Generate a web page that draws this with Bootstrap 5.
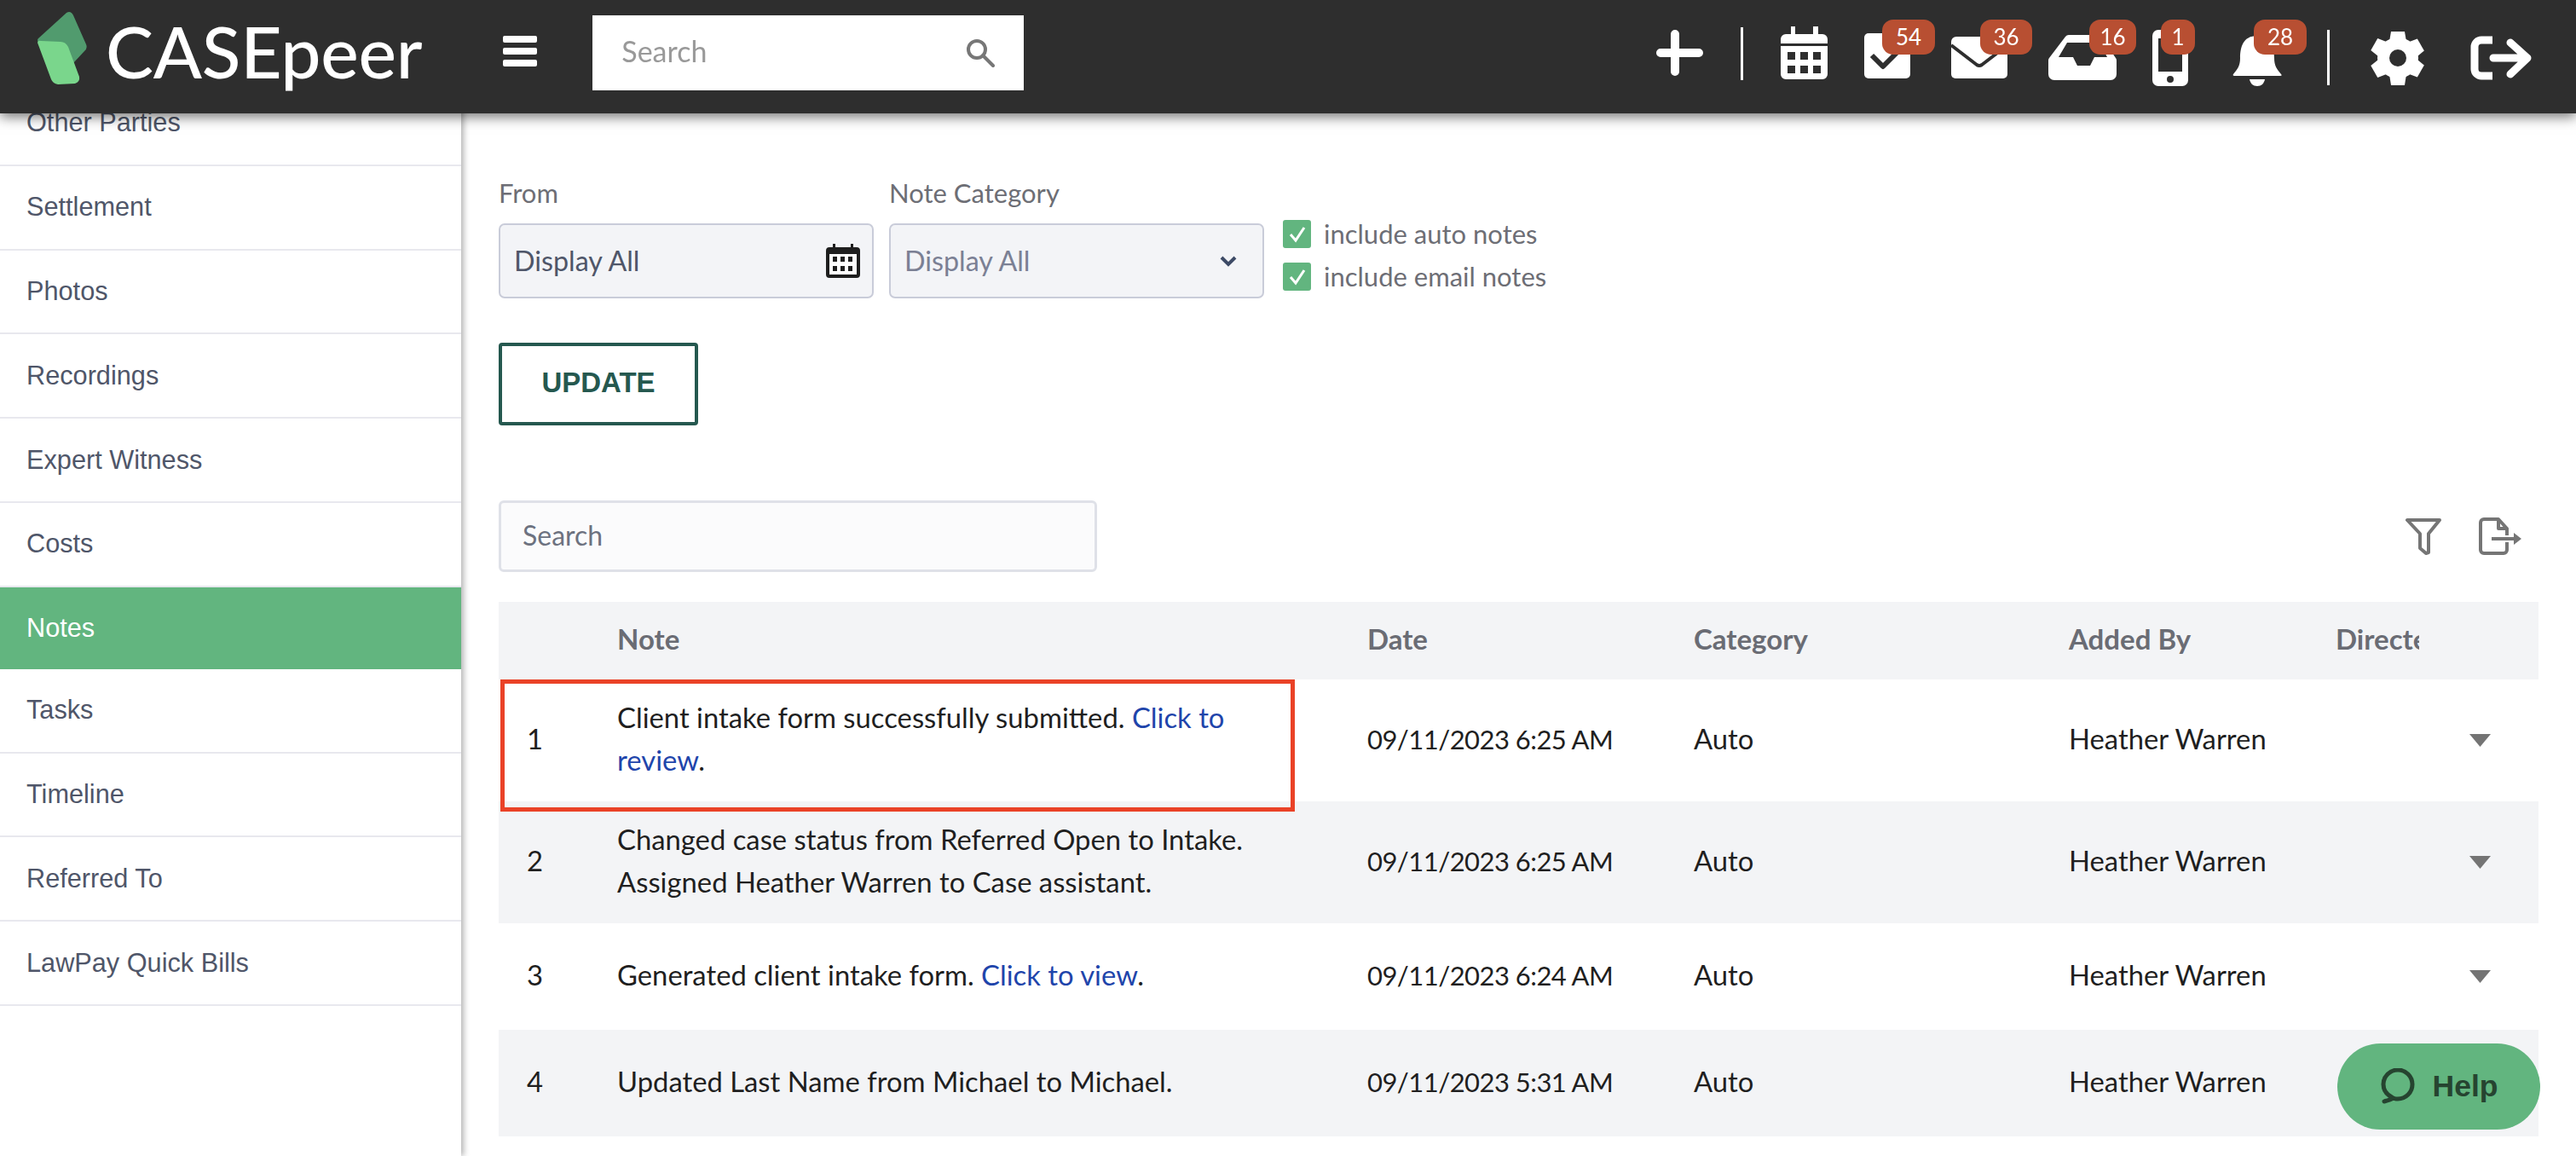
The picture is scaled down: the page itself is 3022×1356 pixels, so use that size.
<!DOCTYPE html>
<html lang="en">
<head>
<meta charset="UTF-8">
<title>CASEpeer Notes</title>
<link href="https://cdn.jsdelivr.net/npm/bootstrap@5.3.0/dist/css/bootstrap.min.css" rel="stylesheet">
<style>
html, body { height: 100%; overflow: hidden; }
body { font-family: "Lato", sans-serif; font-size: 32.8px; color: #1f1f1f; background: #fff; }
.top-bar { height: 133px; background: #2e2e2e; box-shadow: 0 4px 14px rgba(0,0,0,.55); padding: 0; }
.brand-mark { width: 60px; height: 86px; margin-left: 44px; margin-bottom: 19px; }
.brand-name { font-family: "Lato", sans-serif; font-size: 84px; font-weight: 500; color: #fff; margin: 0 0 14px 20px; line-height: 1; letter-spacing: -.25px; padding: 0; }
.brand-name:hover { color: #fff; }
.burger { width: 40px; height: 36px; margin-left: 95px; margin-bottom: 13px; display: flex; flex-direction: column; justify-content: space-between; }
.burger span { height: 8px; background: #fff; border-radius: 2px; }
.top-search { width: 506px; height: 88px; margin-left: 65px; margin-bottom: 9px; background: #fff; padding: 0 34px 0 34px; color: #999; font-size: 34px; }
.top-search span { padding-bottom: 5px; }
.top-icons { margin-left: auto; margin-right: 52px; }
.ico { display: block; flex: none; }
.ico-badge { position: absolute; top: 23px; height: 41px; background: #b84f32; color: #fff; border-radius: 13px; font-size: 26px; line-height: 40px; text-align: center; }
.icon-strip { position: relative; height: 133px; width: 1040px; }
.side-col { width: 541px; flex: none; height: 1356px; padding-top: 96px; box-shadow: 3px 0 7px rgba(0,0,0,.3); background: #fff; position: relative; }
.side-link { display: flex; align-items: center; height: 98.8px; padding: 0 31px; border-bottom: 2px solid #e8e8ee; color: #4f5669; font-family: "Liberation Sans", sans-serif; font-size: 30.7px; text-decoration: none; }
.side-link.picked { background: #62b57f; color: #fff; border-bottom: 0; height: 96px; }
.main-col { flex: 1; min-width: 0; padding: 204px 44px 0; }
.field-label { color: #6d6e75; font-size: 31px; line-height: 44px; margin: 0 0 14px; }
.field-box { width: 440px; height: 88px; background: #f3f4f7; border: 2px solid #c9ccd9; border-radius: 7px; padding: 0 14px 0 16px; color: #4f5669; display: flex; align-items: center; justify-content: space-between; font-size: 32.3px; }
.field-box.muted { color: #7b8094; }
.tick-box { width: 33px; height: 33px; background: #62b57f; border-radius: 3px; display: flex; align-items: center; justify-content: center; }
.tick-row { color: #6d6e75; font-size: 31px; line-height: 33px; gap: 15px; }
.update-btn { width: 234px; height: 97px; border: 4px solid #25584f; border-radius: 4px; background: #fff; color: #25584f; font-family: "Liberation Sans", sans-serif; font-weight: 700; font-size: 33px; margin-top: 52px; padding: 0 0 3px; }
.note-search { width: 702px; height: 84px; border: 3px solid #dfe1e8; border-radius: 6px; background: #fbfbfc; color: #6d7280; padding: 0 25px 3px; font-size: 32px; }
.tools-row { margin-top: 88px; margin-bottom: 35px; }
.notes-table { width: 2393px; table-layout: fixed; margin: 0; border-collapse: collapse; }
.notes-table th, .notes-table td { border: 0; padding: 0 0 3px; vertical-align: middle; box-shadow: none; background: transparent; color: #1f1f1f; line-height: 50px; }
.notes-table thead th { height: 91px; padding-bottom: 5px; background: #f3f4f6; color: #6a6c74; font-weight: 700; font-size: 33px; }
.notes-table tbody tr.shade td { background: #f3f4f6; }
.notes-table .c-num { padding-left: 33px; }
.notes-table .c-note-wrap { padding-right: 80px; }
.notes-table .c-date { font-size: 31px; letter-spacing: -.55px; }
.notes-table a { color: #1f45ab; text-decoration: none; }
.clip-head { display: block; width: 98px; overflow: hidden; white-space: nowrap; }
.row-a { height: 143px; } .row-b { height: 125px; }
.row-caret { display: block; width: 25px; height: 15px; margin: 3px 0 0 157px; background: #747474; clip-path: polygon(0 0, 100% 0, 50% 100%); }
.first-flag { position: absolute; left: 587px; top: 797px; width: 932px; height: 155px; border: 5px solid #ea4227; pointer-events: none; }
.help-pill { position: absolute; left: 2742px; top: 1224px; width: 238px; height: 101px; background: #62b57f; border-radius: 51px; color: #264430; font-family: "Liberation Sans", sans-serif; font-weight: 700; font-size: 35.5px; gap: 20px; }
</style>
</head>
<body>
<nav class="navbar fixed-top top-bar flex-nowrap justify-content-start">
  <svg class="brand-mark" viewBox="44 14 60 86">
    <path d="M78 15Q83 12 86 18L101 52Q103 57 99 60L86 74L70 50L45 49Q43 47 45 45Z" fill="#519b6e"/>
    <path d="M44 50Q44 47 48 48L71 49Q77 49 80 55L93 90Q94 96 88 98L68 99Q62 98 60 93Z" fill="#7ad68c"/>
  </svg>
  <a class="navbar-brand brand-name" href="#">CASEpeer</a>
  <div class="burger"><span></span><span></span><span></span></div>
  <div class="top-search d-flex align-items-center justify-content-between">
    <span>Search</span>
    <svg width="34" height="34" viewBox="0 0 34 34" fill="none" stroke="#777" stroke-width="4"><circle cx="13" cy="13" r="10"/><path d="M20 20l12 12" stroke-linecap="round"/></svg>
  </div>
  <div class="icon-strip top-icons">
    <svg width="1040" height="133" viewBox="1930 0 1040 133" class="ico">
      <g fill="#fff">
        <!-- plus -->
        <path d="M1965 35a5 5 0 0 1 5 5v17h23a5 5 0 0 1 5 5v0a5 5 0 0 1 -5 5h-23v17a5 5 0 0 1 -10 0v-17h-12a5 5 0 0 1 -5 -5v0a5 5 0 0 1 5 -5h12v-17a5 5 0 0 1 5 -5z"/>
        <rect x="2042" y="32" width="3" height="62"/>
        <!-- calendar -->
        <path d="M2101 31h5v9h21v-9h6v9h5a6 6 0 0 1 6 6v5h-55v-5a6 6 0 0 1 6 -6h6zM2089 54h55v33a6 6 0 0 1 -6 6h-43a6 6 0 0 1 -6 -6z"/>
        <!-- check -->
        <rect x="2187" y="39" width="54" height="53" rx="5"/>
        <!-- mail -->
        <path d="M2289 49a6 6 0 0 1 6 -6h54a6 6 0 0 1 6 6v38a5 5 0 0 1 -5 5h-56a5 5 0 0 1 -5 -5z"/>
        <!-- tray -->
        <path d="M2428 41h32a5 5 0 0 1 5 2l17 25q1 1 1 3v16a7 7 0 0 1 -7 7h-66a7 7 0 0 1 -7 -7v-16q0 -2 1 -3l19 -25a5 5 0 0 1 5 -2z"/>
        <!-- phone -->
        <rect x="2525" y="35" width="42" height="66" rx="7"/>
        <!-- bell -->
        <path d="M2648 42c-17 0-20 14-20 26 0 9-3 13-8 19 -1 1 0 2 1 2h54c2 0 2 -1 1 -2 -5 -6 -8 -10 -8 -19 0 -12 -3 -26 -20 -26z"/>
        <path d="M2639 93h18c-1 5-4 8-9 8s-8 -3-9 -8z"/>
        <rect x="2730" y="35" width="3" height="65"/>
        <!-- gear -->
        <circle cx="2813" cy="68" r="24"/>
        <path d="M2805 37h16l2 12v38l-2 13h-16l-2 -13v-38z"/>
        <path d="M2805 37h16l2 12v38l-2 13h-16l-2 -13v-38z" transform="rotate(60 2813 68)"/>
        <path d="M2805 37h16l2 12v38l-2 13h-16l-2 -13v-38z" transform="rotate(120 2813 68)"/>
      </g>
      <!-- sign out -->
      <g fill="none" stroke="#fff" stroke-width="9" stroke-linecap="round" stroke-linejoin="round">
        <path d="M2924 47h-13a8 8 0 0 0 -8 8v26a8 8 0 0 0 8 8h13" stroke-linecap="butt"/>
        <path d="M2925 68h40M2945 50l20 18 -20 19"/>
      </g>
      <g fill="#2e2e2e">
        <rect x="2089" y="51" width="55" height="3"/>
        <rect x="2097" y="61" width="9" height="9"/><rect x="2112" y="61" width="9" height="9"/><rect x="2127" y="61" width="9" height="9"/>
        <rect x="2097" y="77" width="9" height="9"/><rect x="2112" y="77" width="9" height="9"/><rect x="2127" y="77" width="9" height="9"/>
        <circle cx="2813" cy="68" r="10"/>
        <path d="M2425 50h38l9 17h-15l-5 10h-15l-5 -10h-17z"/>
        <rect x="2532" y="45" width="28" height="39"/>
        <circle cx="2546" cy="93" r="4"/>
      </g>
      <g fill="none" stroke="#2e2e2e" stroke-linejoin="round">
        <path d="M2196 65l13 13 17 -17" stroke-width="6"/>
        <path d="M2289 53l30 23q3 2 6 0l30 -23" stroke-width="4"/>
      </g>
    </svg>
    <span class="ico-badge" style="left:278px;width:62px">54</span>
    <span class="ico-badge" style="left:393px;width:61px">36</span>
    <span class="ico-badge" style="left:521px;width:55px">16</span>
    <span class="ico-badge" style="left:605px;width:40px">1</span>
    <span class="ico-badge" style="left:714px;width:62px">28</span>
  </div>
</nav>

<div class="d-flex">
  <aside class="side-col">
    <a class="side-link" href="#">Other Parties</a>
    <a class="side-link" href="#">Settlement</a>
    <a class="side-link" href="#">Photos</a>
    <a class="side-link" href="#">Recordings</a>
    <a class="side-link" href="#">Expert Witness</a>
    <a class="side-link" href="#">Costs</a>
    <a class="side-link picked" href="#">Notes</a>
    <a class="side-link" href="#">Tasks</a>
    <a class="side-link" href="#">Timeline</a>
    <a class="side-link" href="#">Referred To</a>
    <a class="side-link" href="#">LawPay Quick Bills</a>
  </aside>

  <main class="main-col">
    <div class="d-flex align-items-end" style="gap:18px">
      <div>
        <p class="field-label">From</p>
        <div class="field-box"><span>Display All</span>
          <svg width="40" height="40" viewBox="0 0 40 40"><path d="M8 0h3v4h18v-4h3v4h4a4 4 0 0 1 4 4v28a4 4 0 0 1 -4 4h-32a4 4 0 0 1 -4 -4v-28a4 4 0 0 1 4 -4h4z" fill="#1e1e1e"/><rect x="4" y="12" width="32" height="24" fill="#fff"/><g fill="#1e1e1e"><rect x="8" y="15" width="5" height="6"/><rect x="17" y="15" width="5" height="6"/><rect x="26" y="15" width="5" height="6"/><rect x="8" y="26" width="5" height="6"/><rect x="17" y="26" width="5" height="6"/><rect x="26" y="26" width="5" height="6"/></g></svg>
        </div>
      </div>
      <div>
        <p class="field-label">Note Category</p>
        <div class="field-box muted"><span>Display All</span>
          <svg width="20" height="13" viewBox="0 0 20 13" class="me-3"><path d="M2 2l8 8 8 -8" fill="none" stroke="#3d4a66" stroke-width="4"/></svg>
        </div>
      </div>
      <div class="d-flex flex-column" style="gap:17px;padding-bottom:9px;margin-left:4px">
        <div class="d-flex align-items-center tick-row"><span class="tick-box"><svg width="24" height="24" viewBox="0 0 24 24"><path d="M4 12l6 7 10 -15" fill="none" stroke="#fff" stroke-width="3"/></svg></span>include auto notes</div>
        <div class="d-flex align-items-center tick-row"><span class="tick-box"><svg width="24" height="24" viewBox="0 0 24 24"><path d="M4 12l6 7 10 -15" fill="none" stroke="#fff" stroke-width="3"/></svg></span>include email notes</div>
      </div>
    </div>

    <button class="btn update-btn" type="button">UPDATE</button>

    <div class="d-flex justify-content-between align-items-center tools-row">
      <div class="note-search d-flex align-items-center">Search</div>
      <div class="d-flex align-items-center" style="gap:43px;margin-right:20px">
        <svg width="44" height="44" viewBox="0 0 44 44" fill="none" stroke="#757575" stroke-width="4" stroke-linejoin="round"><path d="M3 3h38L28 19v22l-3 1-7-6V19z"/></svg>
        <svg width="50" height="44" viewBox="0 0 50 44" fill="none" stroke="#757575" stroke-width="4" stroke-linejoin="round"><path d="M33 21V13L23 2H6a4 4 0 0 0 -4 4v32a4 4 0 0 0 4 4h23a4 4 0 0 0 4 -4v-9M23 2v11h10M15 25h27"/><path d="M41 18l9 7-9 7z" fill="#757575" stroke="none"/></svg>
      </div>
    </div>

    <table class="table notes-table">
      <colgroup><col style="width:139px"><col style="width:880px"><col style="width:383px"><col style="width:440px"><col style="width:313px"><col style="width:238px"></colgroup>
      <thead>
        <tr><th></th><th>Note</th><th>Date</th><th>Category</th><th>Added By</th><th><span class="clip-head">Directed To</span></th></tr>
      </thead>
      <tbody>
        <tr class="row-a">
          <td class="c-num">1</td>
          <td class="c-note-wrap">Client intake form successfully submitted. <a href="#">Click to review</a>.</td>
          <td class="c-date">09/11/2023 6:25 AM</td><td>Auto</td><td>Heather Warren</td><td><span class="row-caret"></span></td>
        </tr>
        <tr class="row-a shade">
          <td class="c-num">2</td>
          <td>Changed case status from Referred Open to Intake.<br>Assigned Heather Warren to Case assistant.</td>
          <td class="c-date">09/11/2023 6:25 AM</td><td>Auto</td><td>Heather Warren</td><td><span class="row-caret"></span></td>
        </tr>
        <tr class="row-b">
          <td class="c-num">3</td>
          <td>Generated client intake form. <a href="#">Click to view</a>.</td>
          <td class="c-date">09/11/2023 6:24 AM</td><td>Auto</td><td>Heather Warren</td><td><span class="row-caret"></span></td>
        </tr>
        <tr class="row-b shade">
          <td class="c-num">4</td>
          <td>Updated Last Name from Michael to Michael.</td>
          <td class="c-date">09/11/2023 5:31 AM</td><td>Auto</td><td>Heather Warren</td><td></td>
        </tr>
      </tbody>
    </table>
  </main>
</div>

<div class="first-flag"></div>
<div class="help-pill d-flex align-items-center justify-content-center">
  <svg width="42" height="44" viewBox="0 0 42 44" fill="none" stroke="#264430" stroke-width="5" stroke-linecap="round" stroke-linejoin="round"><path d="M14 34c-6-3-10-8-10-15a17 17 0 1 1 17 17c-2 0-4 0-5-1-3 2-7 3-11 4 3-1 8-2 9-5z"/></svg>
  <span>Help</span>
</div>
</body>
</html>
